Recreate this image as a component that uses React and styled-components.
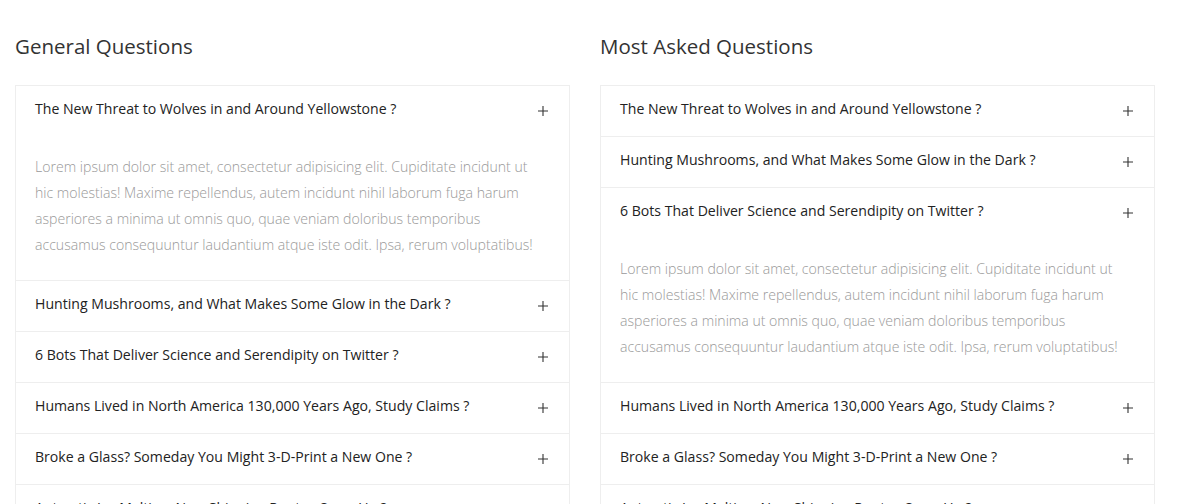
import React, { useState } from "react";
import styled, { createGlobalStyle } from "styled-components";

const GlobalStyle = createGlobalStyle`
  body {
    margin: 0;
    background: #fff;
    font-family: "Open Sans", "Noto Sans", sans-serif;
  }
`;

const questions = [
  "The New Threat to Wolves in and Around Yellowstone ?",
  "Hunting Mushrooms, and What Makes Some Glow in the Dark ?",
  "6 Bots That Deliver Science and Serendipity on Twitter ?",
  "Humans Lived in North America 130,000 Years Ago, Study Claims ?",
  "Broke a Glass? Someday You Might 3-D-Print a New One ?",
  "Antarctic Ice Melting: New Shipping Routes Open Up ?",
];

const answer =
  "Lorem ipsum dolor sit amet, consectetur adipisicing elit. Cupiditate incidunt ut hic molestias! Maxime repellendus, autem incidunt nihil laborum fuga harum asperiores a minima ut omnis quo, quae veniam doloribus temporibus accusamus consequuntur laudantium atque iste odit. Ipsa, rerum voluptatibus!";

const PlusIcon = () => (
  <svg width="10" height="10" viewBox="0 0 10 10">
    <path d="M5 0V10M0 5H10" stroke="#333" strokeWidth="1.1" fill="none" />
  </svg>
);

const Accordion = ({ title, openIndex }) => {
  const [open, setOpen] = useState(openIndex);
  return (
    <Column>
      <Title>{title}</Title>
      <List>
        {questions.map((q, i) => (
          <Item key={i}>
            <Question onClick={() => setOpen(open === i ? -1 : i)}>
              <span>{q}</span>
              <Toggle>
                <PlusIcon />
              </Toggle>
            </Question>
            {open === i && <Answer>{answer}</Answer>}
          </Item>
        ))}
      </List>
    </Column>
  );
};

const App = () => (
  <>
    <GlobalStyle />
    <Page>
      <Accordion title="General Questions" openIndex={0} />
      <Accordion title="Most Asked Questions" openIndex={2} />
    </Page>
  </>
);

export default App;

const Page = styled.div`
  display: grid;
  grid-template-columns: 555px 555px;
  column-gap: 30px;
  padding: 32px 15px 0;
`;

const Column = styled.div`
  display: flex;
  flex-direction: column;
`;

const Title = styled.h3`
  margin: 0 0 25px;
  font-size: 20.5px;
  font-weight: 400;
  line-height: 28px;
  color: #333;
`;

const List = styled.div`
  border: 1px solid #eee;
  border-bottom: none;
`;

const Item = styled.div`
  border-bottom: 1px solid #eee;
`;

const Question = styled.div`
  display: flex;
  align-items: center;
  justify-content: space-between;
  padding: 13px 21px 17px 19px;
  font-size: 14.1px;
  line-height: 20px;
  color: #222;
  cursor: pointer;
`;

const Toggle = styled.span`
  display: flex;
  width: 10px;
  margin-top: 3px;
`;

const Answer = styled.p`
  margin: 0;
  padding: 18px 30px 22px 19px;
  font-size: 14.1px;
  font-weight: 300;
  line-height: 26px;
  color: #999;
`;
